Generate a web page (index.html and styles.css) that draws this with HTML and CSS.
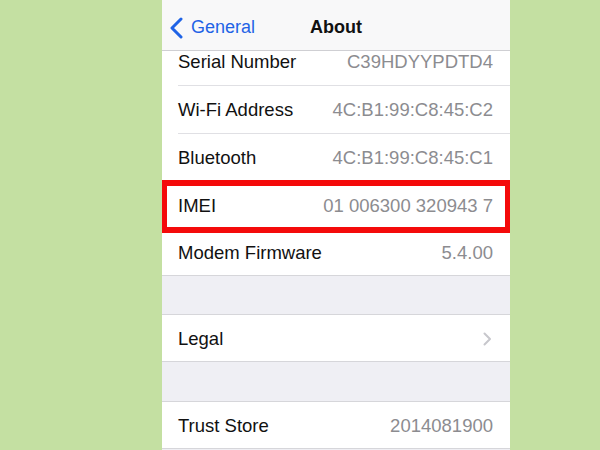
FILE: index.html
```html
<!DOCTYPE html>
<html>
<head>
<meta charset="utf-8">
<link rel="stylesheet" href="styles.css">
</head>
<body>
<div class="page">
  <div class="screen">
    <header class="nav">
      <div class="back">
        <svg class="back-icon" width="14" height="22" viewBox="0 0 14 22"><path d="M11 2 L2 11 L11 20" fill="none" stroke="#1f63e6" stroke-width="3" stroke-linecap="round" stroke-linejoin="round"/></svg>
        <span>General</span>
      </div>
      <h1 class="title">About</h1>
      <div></div>
    </header>

    <section class="group group-top">
      <div class="row row-cut"><div class="row-inner"><span class="label">Serial Number</span><span class="value">C39HDYYPDTD4</span></div></div>
      <div class="row"><div class="row-inner"><span class="label">Wi-Fi Address</span><span class="value">4C:B1:99:C8:45:C2</span></div></div>
      <div class="row"><div class="row-inner"><span class="label">Bluetooth</span><span class="value">4C:B1:99:C8:45:C1</span></div></div>
      <div class="row row-marked"><div class="row-inner"><span class="label">IMEI</span><span class="value">01 006300 320943 7</span></div><div class="highlight"></div></div>
      <div class="row row-last row-short"><div class="row-inner"><span class="label">Modem Firmware</span><span class="value">5.4.00</span></div></div>
    </section>

    <div class="gap"></div>

    <section class="group">
      <div class="row row-last row-legal"><div class="row-inner"><span class="label">Legal</span>
        <svg class="chevron" width="9" height="14" viewBox="0 0 9 14"><path d="M1.5 1.5 L7 7 L1.5 12.5" fill="none" stroke="#c7c7cc" stroke-width="2" stroke-linecap="round" stroke-linejoin="round"/></svg>
      </div></div>
    </section>

    <div class="gap gap-2"></div>

    <section class="group">
      <div class="row row-last row-legal"><div class="row-inner"><span class="label">Trust Store</span><span class="value">2014081900</span></div></div>
    </section>
  </div>
</div>
</body>
</html>
```

FILE: styles.css
```css
* { box-sizing: border-box; margin: 0; padding: 0; }
html, body { width: 600px; height: 450px; overflow: hidden; }
body {
  background: #c4e0a2;
  font-family: "Liberation Sans", Arial, sans-serif;
}
.page {
  display: flex;
  padding-left: 162px;
  height: 450px;
}
.screen {
  width: 348px;
  height: 450px;
  background: #efeff4;
  display: flex;
  flex-direction: column;
  overflow: hidden;
}
.nav {
  height: 51px;
  flex: none;
  background: #f8f8f9;
  border-bottom: 1px solid #cfcfd3;
  display: grid;
  grid-template-columns: 1fr auto 1fr;
  align-items: center;
  padding-top: 5px;
}
.back {
  display: flex;
  align-items: center;
  color: #1f63e6;
  font-size: 18px;
  padding-left: 8px;
  gap: 7px;
}
.back-icon { flex: none; }
.title {
  font-size: 18px;
  font-weight: bold;
  color: #111;
}
.group {
  background: #fff;
  border-top: 1px solid #d6d6da;
  border-bottom: 1px solid #d6d6da;
}
.group-top { border-top: none; }
.row {
  height: 48px;
  padding-left: 16px;
  position: relative;
  display: flex;
}
.row-inner {
  flex: 1;
  display: flex;
  align-items: center;
  justify-content: space-between;
  padding-right: 17px;
  padding-top: 1px;
  border-bottom: 1px solid #e0e0e4;
}
.row-last .row-inner { border-bottom: none; }
.row-cut { height: 35px; }
.row-cut .row-inner { padding-bottom: 12px; padding-top: 0; }
.row-short { height: 45px; }
.row-legal { height: 46px; }
.label {
  font-size: 18.5px;
  color: #111;
}
.value {
  font-size: 18.5px;
  color: #8c8c90;
}
.chevron { margin-right: 1px; }
.highlight {
  position: absolute;
  top: -2px;
  bottom: -3px;
  left: -1px;
  right: -1px;
  border: 6px solid #f40a0a;
}
.gap { height: 38px; flex: none; }
.gap-2 { height: 39px; }
```
